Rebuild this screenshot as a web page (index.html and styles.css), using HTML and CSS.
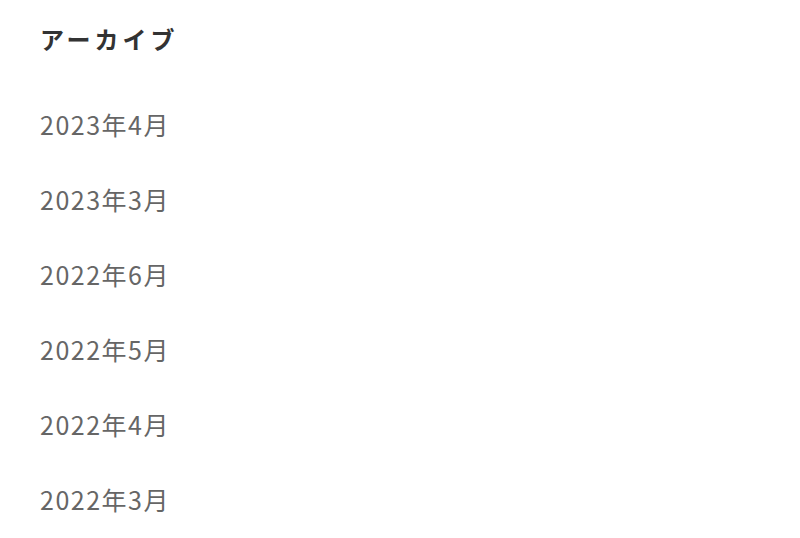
FILE: index.html
```html
<!DOCTYPE html>
<html lang="ja">
<head>
  <meta charset="UTF-8">
  <meta name="viewport" content="width=device-width, initial-scale=1.0">
  <title>アーカイブ</title>
  <link rel="stylesheet" href="styles.css">
</head>
<body>
  <aside class="widget">
    <h2 class="widget-title">アーカイブ</h2>
    <ul class="archive-list">
      <li><a href="#">2023年4月</a></li>
      <li><a href="#">2023年3月</a></li>
      <li><a href="#">2022年6月</a></li>
      <li><a href="#">2022年5月</a></li>
      <li><a href="#">2022年4月</a></li>
      <li><a href="#">2022年3月</a></li>
    </ul>
  </aside>
</body>
</html>
```

FILE: styles.css
```css
body {
  margin: 0;
  background-color: #fff;
  font-family: "Noto Sans CJK JP", "Noto Sans", sans-serif;
}
.widget {
  padding: 19px 40px;
}
.widget-title {
  margin: 0 0 28px;
  font-size: 24px;
  font-weight: bold;
  letter-spacing: 4px;
  line-height: 40px;
  color: #333;
}
.archive-list {
  list-style: none;
  margin: 0;
  padding: 0;
}
.archive-list li {
  line-height: 75px;
  font-size: 25px;
  letter-spacing: 1.5px;
}
.archive-list a {
  color: #666;
  text-decoration: none;
}
```
